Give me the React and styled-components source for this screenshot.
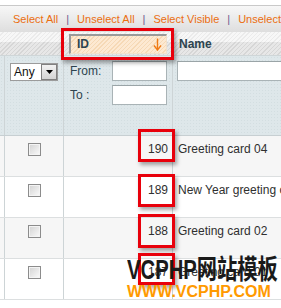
import React from "react";
import styled, { createGlobalStyle } from "styled-components";

const Global = createGlobalStyle`
  html, body { margin: 0; padding: 0; background: #fff; overflow: hidden; }
  body { font-family: "Liberation Sans", Arial, sans-serif; font-size: 12px; color: #2f2f2f; }
`;

const Page = styled.div`
  position: relative;
  width: 281px;
  height: 308px;
  overflow: hidden;
`;

const TopGap = styled.div`
  height: 5px;
  border-bottom: 1px solid #c9c9c9;
`;

const Toolbar = styled.div`
  height: 26px;
  display: flex;
  align-items: center;
  padding-left: 13px;
  background: linear-gradient(to bottom, #f7f7f7, #dedede);
  font-size: 11px;
  white-space: nowrap;
`;

const ToolLink = styled.span`
  color: #eb6e10;
`;

const Sep = styled.span`
  color: #6b5a8e;
  margin: 0 8px;
`;

const Row = styled.div`
  display: grid;
  grid-template-columns: 4px 60px 109px 400px;
  height: ${(p) => p.$h}px;
  box-sizing: border-box;
  background: ${(p) => p.$bg || "#fff"};
  border-bottom: 1px solid ${(p) => p.$line || "#dcdfe0"};
`;

const HeadRow = styled(Row)`
  background:
    linear-gradient(to bottom, rgba(255,255,255,0.35) 0 45%, rgba(0,0,0,0.05) 45% 100%),
    repeating-linear-gradient(-45deg, #f3f3f3 0 2px, #e1e1e1 2px 3px);
  border-bottom: 1px solid #cfd6d8;
`;

const FilterRow = styled(Row)`
  background-color: #dee7ea;
  background-image: radial-gradient(#d3dee1 0.8px, transparent 0.9px);
  background-size: 3px 3px;
  border-bottom: 1px solid #c7cfd2;
`;

const Cell = styled.div`
  box-sizing: border-box;
  border-left: ${(p) => (p.$first ? "1px solid #cdd4d6" : "none")};
  border-right: ${(p) => (p.$noRight ? "none" : "1px solid #cdd4d6")};
  padding: ${(p) => p.$pad || "0"};
  text-align: ${(p) => p.$align || "left"};
  display: ${(p) => (p.$flex ? "flex" : "block")};
  justify-content: ${(p) => p.$justify || "flex-start"};
  position: relative;
  white-space: nowrap;
`;

const HeadCell = styled.div`
  box-sizing: border-box;
  padding: ${(p) => p.$pad || "0"};
  display: flex;
  align-items: center;
`;

const HeadLabel = styled.span`
  font-weight: bold;
  color: #2d444f;
  font-size: 12px;
`;

const SortBox = styled.div`
  box-sizing: border-box;
  height: 20px;
  width: 98px;
  margin-left: 5px;
  border-top: 2px solid #9a9a9a;
  border-left: 2px solid #9a9a9a;
  border-bottom: 1px solid #f0e0cc;
  border-right: 1px solid #f0e0cc;
  background: repeating-linear-gradient(-45deg, #fde9d2 0 2px, #f6d9b6 2px 3px);
  display: flex;
  align-items: center;
  justify-content: space-between;
  padding: 0 4px 0 6px;
`;

const Arrow = styled.svg`
  display: block;
`;

const SelectBox = styled.div`
  box-sizing: border-box;
  margin: 7px 0 0 5px;
  width: 48px;
  height: 18px;
  background: #fff;
  border: 1px solid #9b9b9b;
  display: flex;
  align-items: center;
  justify-content: space-between;
  font-size: 12px;
  color: #111;
`;

const SelectText = styled.span`
  padding-left: 3px;
`;

const SelectBtn = styled.div`
  box-sizing: border-box;
  width: 16px;
  height: 16px;
  background: linear-gradient(to bottom, #f2f2f2, #d4d4d4);
  border: 1px solid #808080;
  display: flex;
  align-items: center;
  justify-content: center;
`;

const RangeGrid = styled.div`
  display: grid;
  grid-template-columns: 42px 55px;
  row-gap: 4px;
  align-items: center;
  padding: 5px 0 0 6px;
`;

const FieldLabel = styled.span`
  color: #2d444f;
  font-size: 12px;
`;

const TextInput = styled.div`
  box-sizing: border-box;
  width: ${(p) => p.$w}px;
  height: 20px;
  background: #fff;
  border: 1px solid #a9b3b6;
  border-top-color: #9aa4a7;
`;

const Check = styled.div`
  box-sizing: border-box;
  width: 13px;
  height: 13px;
  margin-top: 7px;
  border: 1px solid #8c8c8c;
  background: linear-gradient(135deg, #d2d2d2, #fbfbfb);
  box-shadow: inset 0 0 0 1px #f4f4f4;
`;

const Annot = styled.div`
  position: absolute;
  box-sizing: border-box;
  border: 3px solid #e8000b;
  box-shadow: 2px 3px 4px rgba(0, 0, 0, 0.35);
  pointer-events: none;
`;

const Watermark = styled.div`
  position: absolute;
  left: 127px;
  top: 255px;
  display: flex;
  flex-direction: column;
  align-items: flex-start;
`;

const WmTitle = styled.div`
  font-family: "Liberation Sans", "Noto Sans CJK SC", sans-serif;
  font-weight: bold;
  font-size: 27px;
  line-height: 30px;
  color: #1a1a1a;
  transform: scaleX(0.75);
  transform-origin: left center;
  white-space: nowrap;
`;

const WmUrl = styled.div`
  font-family: "Liberation Sans", Arial, sans-serif;
  font-weight: bold;
  font-size: 16px;
  line-height: 16px;
  color: #ff9a00;
  margin-top: -1px;
  white-space: nowrap;
`;

const rows = [
  { id: 190, name: "Greeting card 04", bg: "#f6f6f6" },
  { id: 189, name: "New Year greeting card", bg: "#ffffff" },
  { id: 188, name: "Greeting card 02", bg: "#f6f6f6" },
  { id: 187, name: "Greeting card 01", bg: "#ffffff" },
];

const boxes = [
  { l: 61, t: 28, w: 113, h: 32 },
  { l: 138, t: 129, w: 37, h: 33 },
  { l: 138, t: 174, w: 37, h: 33 },
  { l: 138, t: 214, w: 37, h: 34 },
  { l: 138, t: 253, w: 37, h: 32 },
];

export default function App() {
  return (
    <Page>
      <Global />
      <TopGap />
      <Toolbar>
        <ToolLink>Select All</ToolLink>
        <Sep>|</Sep>
        <ToolLink>Unselect All</ToolLink>
        <Sep>|</Sep>
        <ToolLink>Select Visible</ToolLink>
        <Sep>|</Sep>
        <ToolLink>Unselect Visible</ToolLink>
      </Toolbar>

      <HeadRow $h={24}>
        <HeadCell />
        <HeadCell />
        <HeadCell>
          <SortBox>
            <HeadLabel>ID</HeadLabel>
            <Arrow width="9" height="13" viewBox="0 0 9 13">
              <path d="M4.5 0.5 V11" stroke="#f07a14" strokeWidth="1.4" />
              <path d="M1 7.5 L4.5 12 L8 7.5" stroke="#f07a14" strokeWidth="1.4" fill="none" />
            </Arrow>
          </SortBox>
        </HeadCell>
        <HeadCell $pad="0 0 0 6px">
          <HeadLabel>Name</HeadLabel>
        </HeadCell>
      </HeadRow>

      <FilterRow $h={80}>
        <div />
        <Cell $first>
          <SelectBox>
            <SelectText>Any</SelectText>
            <SelectBtn>
              <svg width="7" height="4" viewBox="0 0 7 4">
                <path d="M0 0 H7 L3.5 4 Z" fill="#000" />
              </svg>
            </SelectBtn>
          </SelectBox>
        </Cell>
        <Cell>
          <RangeGrid>
            <FieldLabel>From:</FieldLabel>
            <TextInput $w={55} />
            <FieldLabel>To :</FieldLabel>
            <TextInput $w={55} />
          </RangeGrid>
        </Cell>
        <Cell $noRight $pad="5px 0 0 4px">
          <TextInput $w={300} />
        </Cell>
      </FilterRow>

      {rows.map((r) => (
        <Row key={r.id} $h={41} $bg={r.bg}>
          <div />
          <Cell $first $flex $justify="center">
            <Check />
          </Cell>
          <Cell $align="right" $pad="6px 4px 0 0">{r.id}</Cell>
          <Cell $noRight $pad="6px 0 0 5px">{r.name}</Cell>
        </Row>
      ))}

      {boxes.map((b, i) => (
        <Annot key={i} style={{ left: b.l, top: b.t, width: b.w, height: b.h }} />
      ))}

      <Watermark>
        <WmTitle>VCPHP网站模板</WmTitle>
        <WmUrl>WWW.VCPHP.COM</WmUrl>
      </Watermark>
    </Page>
  );
}
